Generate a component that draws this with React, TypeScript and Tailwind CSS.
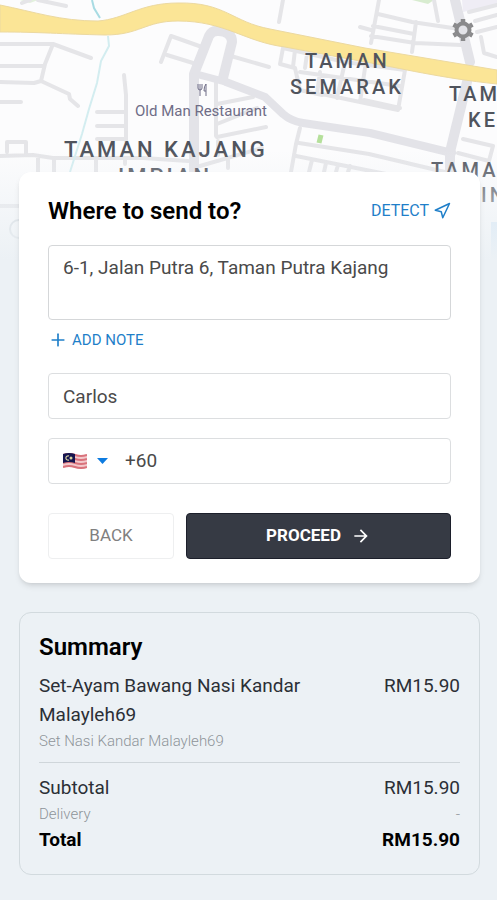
import React, { useState } from "react";
import { Navigation, Plus } from "lucide-react";
import { MdArrowForward } from "react-icons/md";

function MapBackground() {
  return (
    <svg
      className="block w-full h-[260px]"
      viewBox="0 0 497 260"
      preserveAspectRatio="xMidYMin slice"
      fill="none"
      aria-label="Map of Kajang"
    >
      <defs>
        <linearGradient id="fade" x1="0" y1="0" x2="0" y2="1">
          <stop offset="0" stopColor="#ecf1f5" stopOpacity="0" />
          <stop offset="1" stopColor="#ecf1f5" />
        </linearGradient>
      </defs>
      <rect width="497" height="260" fill="#fcfcfd" />

      {/* parks */}
      <path d="M20 0h18l-8 3z" fill="#e3f1dd" />
      <path d="M412 0h22l-6 4z" fill="#d8ecd0" />
      <path d="M462 0h35v4l-34 8z" fill="#efedf5" />

      {/* small streets */}
      <g stroke="#e5e5e8" strokeWidth="4" strokeLinecap="round" strokeLinejoin="round">
        <path d="M38 0l28 6M22 3l8 -3" />
        <path d="M0 44h53l38 14M53 44l-8 20l-4 17M0 66h43M0 82l34 1l7 -2l28 13l1 5l8 7M0 102h21" />
        <path d="M124 75l2 20v46M97 112h28M97 126h28M97 139h28" />
        <path d="M0 156l33 -1l20 3h90l45 3M7 152v-10h19v13M38 158v14M54 160v12M96 160v12M125 158v6" />
        <path d="M161 62l10 -26l31 11M167 55l26 8M231 56l38 11" />
        <path d="M216 80v56M217 104l36 -7M217 124l40 -16M217 137l49 -10M218 141v14M200 166l62 -18M228 160v8" />
        <path d="M283 0l-4 22M379 0l-8 43M378 14l34 8l54 8M373 26l41 8M371 36l44 7l46 2M360 27l11 3M416 22l-4 30M434 0l4 21M469 12l28 -7M475 21l22 -6M477 32l20 -5M481 37l3 16l13 4" />
        <path d="M283 48l-3 16l15 4M283 48l62 14l60 8l-7 40l-76 -16M295 50l-2 17M307 54l-2 14M295 68l5 22l22 5M320 72l-3 22M345 62l-8 36M365 68l-5 34M300 72l100 14M364 100l36 8" />
        <path d="M299 143l70 11l80 19M296 156l90 18M300 128l-4 16l-5 28M312 160l-3 12M326 163l-2 9M338 165l-2 7M350 166l-2 6" />
        <path d="M463 139l30 7l-4 15l-31 -8M0 206h19" />
      </g>

      {/* larger streets */}
      <g stroke="#e3e3e8" strokeLinecap="round" strokeLinejoin="round">
        <path d="M194 172v-98l15 -38q3 -6 10 -5q13 1 13 11l-9 36" strokeWidth="10" />
        <path d="M196 74l30 8" strokeWidth="7" />
        <path d="M226 82l39 15l18 17q8 7 20 9l67 10l82 20" strokeWidth="8" />
        <path d="M455 0l15 62M467 82l-17 70v20" strokeWidth="10" />
      </g>

      {/* river */}
      <path d="M92 0l2 8l6 10" stroke="#a8dbe3" strokeWidth="2" />
      <path d="M108 36l1 10l-8 15l-4 22l-8 26l-7 25l-12 38" stroke="#d3edf0" strokeWidth="2" />

      {/* highway */}
      <path
        d="M0 5C35 12 60 21 98 21C125 19 140 3 178 3C225 2 232 22 270 29L365 48L497 70V84C440 78 400 68 365 62L285 47C245 42 225 21 178 21C145 21 140 35 105 35C60 34 40 32 0 32Z"
        fill="#fbe596"
        stroke="#ecd9a0"
      />
      <path d="M321 135l-2 8" stroke="#b5e09b" strokeWidth="5" />

      {/* place with fork and knife */}
      <path
        d="M198 84v4q0 2 2 2t2 -2v-4M200 84v12M206 96v-12q-2 2 -2 7h2"
        stroke="#6f6d87"
      />
      <circle cx="19" cy="229" r="9" stroke="#cdd3d9" strokeWidth="2" />
      <path d="M491 222h6v38h-6z" fill="#cfe5f8" />

      <g className="font-medium" fill="#50545d">
        <text x="305" y="68" className="text-[20px] tracking-[3px]">TAMAN</text>
        <text x="290" y="94" className="text-[20px] tracking-[3px]">SEMARAK</text>
        <text x="449" y="101" className="text-[20px] tracking-[3px]">TAM</text>
        <text x="468" y="127" className="text-[20px] tracking-[3px]">KE</text>
        <text x="64" y="157" className="text-[22px] tracking-[3px]">TAMAN KAJANG</text>
        <text x="118" y="184" className="text-[22px] tracking-[3px]">IMPIAN</text>
        <text x="431" y="177" className="text-[20px] tracking-[3px]">TAMAN</text>
        <text x="481" y="202" className="text-[20px] tracking-[3px]">IN</text>
      </g>
      <text x="135" y="116" className="text-[15px]" fill="#6f6d87">
        Old Man Restaurant
      </text>
      <rect y="150" width="497" height="110" fill="url(#fade)" />
    </svg>
  );
}

function GearIcon() {
  return (
    <svg className="size-6" viewBox="0 0 24 24" fill="none" stroke="currentColor">
      <circle cx="12" cy="12" r="6.500" strokeWidth="4" />
      <path
        d="M12 4V1M12 20v3M5.100 8L2.500 6.500M18.900 16l2.600 1.500M5.100 16l-2.600 1.500M18.900 8l2.600 -1.500"
        strokeWidth="4.500"
      />
    </svg>
  );
}

function MalaysiaFlag() {
  return (
    <svg className="w-6 h-4" viewBox="0 0 24 16" fill="none">
      <path d="M0 1q6 -2 12 0t12 0v14q-6 2 -12 0t-12 0z" fill="#f3c9cc" />
      <path
        d="M0 2q6 -2 12 0t12 0M0 6q6 -2 12 0t12 0M0 10q6 -2 12 0t12 0M0 14q6 -2 12 0t12 0"
        stroke="#d9737c"
        strokeWidth="2"
      />
      <path d="M0 1q6 -2 12 0v9q-6 -2 -12 0z" fill="#15154f" />
      <path d="M6 3a2.200 2.200 0 1 0 0 4" stroke="#d8d2a0" strokeWidth="1.200" />
      <circle cx="8" cy="5" r="1.500" fill="#d8d2a0" />
    </svg>
  );
}

function Row({ label, value, className }: { label: string; value: string; className: string }) {
  return (
    <div className={`flex justify-between ${className}`}>
      <dt>{label}</dt>
      <dd>{value}</dd>
    </div>
  );
}

function App() {
  const [address, setAddress] = useState("6-1, Jalan Putra 6, Taman Putra Kajang");
  const [name, setName] = useState("Carlos");
  const [phone, setPhone] = useState("+60");

  return (
    <div className="relative min-h-screen overflow-hidden bg-[#ecf1f5] font-[Roboto,sans-serif] text-[#2b2f36]">
      <div className="-mb-[88px]">
        <MapBackground />
      </div>
      <button aria-label="Settings" className="absolute top-[18px] right-[22px] text-[#8a8a8c]">
        <GearIcon />
      </button>

      <main className="relative pr-[17px] pl-[19px] pb-6">
        <form
          className="rounded-xl bg-white px-[29px] py-6 shadow-md"
          onSubmit={(e) => e.preventDefault()}
        >
          <div className="flex items-center justify-between">
            <h1 className="text-[24px] leading-[30px] font-semibold text-black">Where to send to?</h1>
            <button type="button" className="flex items-center gap-1 text-[16px] text-[#1f7fc9]">
              DETECT
              <Navigation size={18} />
            </button>
          </div>
          <textarea
            aria-label="Address"
            className="mt-[19px] block h-[75px] w-full resize-none rounded-[4px] border border-[#d5d7d9] px-[14px] py-2 text-[19px] leading-7 text-[#4a4a4a] outline-none"
            value={address}
            onChange={(e) => setAddress(e.target.value)}
          />
          <button
            type="button"
            className="mt-2 flex h-6 items-center gap-1 text-[15px] text-[#1f7fc9]"
          >
            <Plus size={20} />
            ADD NOTE
          </button>
          <input
            aria-label="Name"
            className="mt-[21px] block h-[46px] w-full rounded-[4px] border border-[#dcdee0] px-[14px] text-[19px] text-[#4a4a4a] outline-none"
            value={name}
            onChange={(e) => setName(e.target.value)}
          />
          <div className="mt-[19px] flex h-[46px] items-center rounded-[4px] border border-[#dcdee0] px-[14px]">
            <div className="relative flex items-center gap-[10px]">
              <MalaysiaFlag />
              <svg className="h-[6px] w-[11px]" viewBox="0 0 11 6" fill="#0d7be0">
                <path d="M0 0h11L5.500 6z" />
              </svg>
              <select
                aria-label="Country code"
                className="absolute inset-0 w-full cursor-pointer opacity-0"
              >
                <option>Malaysia</option>
              </select>
            </div>
            <input
              aria-label="Phone number"
              type="tel"
              className="ml-[17px] min-w-0 flex-1 text-[19px] text-[#4a4a4a] outline-none"
              value={phone}
              onChange={(e) => setPhone(e.target.value)}
            />
          </div>
          <div className="mt-[29px] flex gap-3">
            <button
              type="button"
              className="h-[46px] w-[126px] rounded-[4px] border border-[#eeeff0] text-[17px] text-[#808080]"
            >
              BACK
            </button>
            <button
              type="submit"
              className="flex h-[46px] flex-1 items-center justify-center gap-[10px] rounded-[4px] border border-[#1c1f2b] bg-[#363a44] text-[17px] font-bold text-white"
            >
              PROCEED
              <MdArrowForward size={20} />
            </button>
          </div>
        </form>

        <section className="mt-[29px] rounded-xl border border-[#d2dade] px-[19px] pt-[18px] pb-5">
          <h2 className="text-[24px] leading-8 font-semibold text-black">Summary</h2>
          <div className="mt-2 flex justify-between text-[19px] leading-[29px]">
            <p className="w-[280px]">Set-Ayam Bawang Nasi Kandar Malayleh69</p>
            <p>RM15.90</p>
          </div>
          <p className="text-[15px] leading-6 font-light text-[#8e9499]">Set Nasi Kandar Malayleh69</p>
          <dl className="mt-[9px] border-t border-[#cfd6da] pt-[11px]">
            <Row label="Subtotal" value="RM15.90" className="text-[19px] leading-7" />
            <Row label="Delivery" value="-" className="text-[15px] leading-6 font-light text-[#8e9499]" />
            <Row label="Total" value="RM15.90" className="text-[19px] leading-7 font-bold text-black" />
          </dl>
        </section>
      </main>
    </div>
  );
}

export default App;
